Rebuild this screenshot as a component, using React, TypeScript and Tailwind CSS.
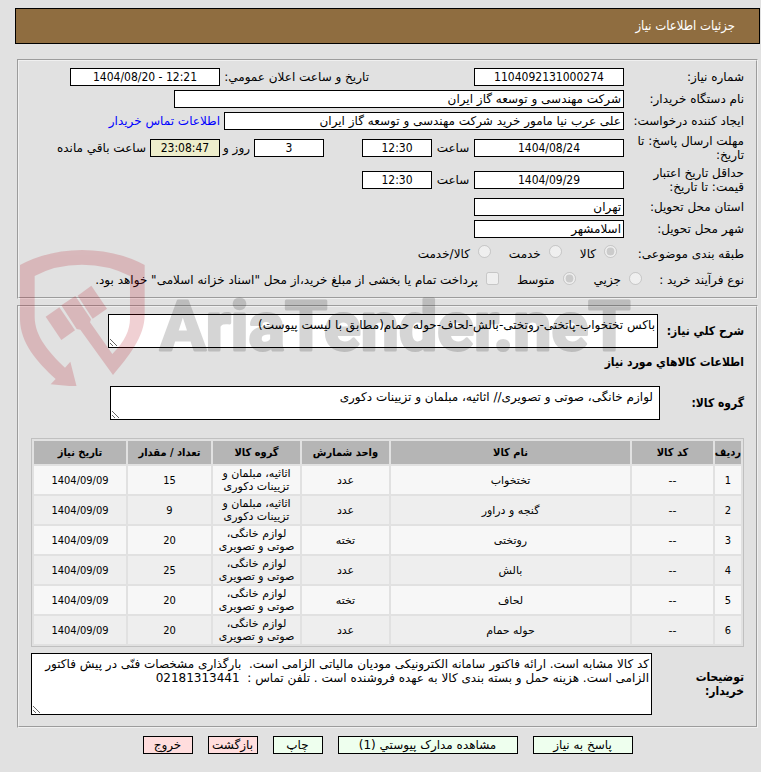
import { useState, type ReactNode } from "react";
import { clsx } from "clsx";

interface Item {
  name: string;
  unit: string;
  group: string;
  qty: number;
}

const DECOR = "اثاثیه، مبلمان و تزیینات دکوری";
const HOME = "لوازم خانگی، صوتی و تصویری";

const items: Item[] = [
  { name: "تختخواب", unit: "عدد", group: DECOR, qty: 15 },
  { name: "گنجه و دراور", unit: "عدد", group: DECOR, qty: 9 },
  { name: "روتختی", unit: "تخته", group: HOME, qty: 20 },
  { name: "بالش", unit: "عدد", group: HOME, qty: 25 },
  { name: "لحاف", unit: "تخته", group: HOME, qty: 20 },
  { name: "حوله حمام", unit: "عدد", group: HOME, qty: 20 },
];

const columns = [
  { title: "ردیف", width: "w-[26px]" },
  { title: "کد کالا", width: "w-[81px]" },
  { title: "نام کالا", width: "" },
  { title: "واحد شمارش", width: "w-[87px]" },
  { title: "گروه کالا", width: "w-[87px]" },
  { title: "تعداد / مقدار", width: "w-[83px]" },
  { title: "تاریخ نیاز", width: "w-[92px]" },
];

interface FieldProps {
  id: string;
  value: string;
  className: string;
  label?: string;
  numeric?: boolean;
}

function Field({ id, value, className, label, numeric }: FieldProps) {
  return (
    <input
      id={id}
      type="text"
      readOnly
      aria-label={label}
      defaultValue={value}
      className={clsx(
        "h-[18px] shrink-0 border border-black px-0.5 leading-[14px] outline-none",
        numeric && "text-center font-['DejaVu_Sans_Condensed',sans-serif] [direction:ltr]",
        className
      )}
    />
  );
}

interface RowProps {
  label: string;
  htmlFor?: string;
  tall?: boolean;
  children: ReactNode;
}

function Row({ label, htmlFor, tall, children }: RowProps) {
  return (
    <div className={clsx("flex items-center", tall ? "h-8" : "h-[22px]")}>
      <label htmlFor={htmlFor} className="w-[120px] shrink-0 pe-1">
        {label}
      </label>
      {children}
    </div>
  );
}

interface OptionProps {
  type: "radio" | "checkbox";
  name: string;
  label: string;
  checked?: boolean;
}

function Option({ type, name, label, checked }: OptionProps) {
  return (
    <label className="flex shrink-0 items-center gap-2 whitespace-nowrap">
      <input type={type} name={name} defaultChecked={checked} disabled className="mb-1 h-[13px] w-[13px]" />
      <span>{label}</span>
    </label>
  );
}

function Watermark() {
  return (
    <svg
      viewBox="20 249 640 137"
      className="pointer-events-none absolute top-[249px] left-5 h-[137px] w-[640px]"
      direction="ltr"
      aria-hidden="true"
    >
      <g transform="translate(0 190) scale(0.33333)" fill="#b00010" opacity="0.18">
        <path d="M60 225Q145 180 246 180Q350 180 434 225V375C434 440 385 500 339 555L241 419L230 417L184 346L226 318L273 388L270 397L337 492C375 455 390 420 390 385V258Q325 224 246 224Q165 224 104 258V380C104 440 150 490 195 533L211 515L230 590L152 583L167 567C110 515 62 460 60 390Z" />
        <path d="M137 380L178 352L225 421L184 450Z" />
        <path d="M233 317L274 287L321 356L278 386Z" />
      </g>
      <text
        x="160"
        y="350"
        fill="#000"
        stroke="#000"
        strokeWidth="3"
        strokeLinejoin="round"
        opacity="0.16"
        fontSize="68"
        className="font-['Roboto',sans-serif] font-bold"
      >
        AriaTender.neT
      </text>
    </svg>
  );
}

interface ActionProps {
  label: string;
  className: string;
}

function Action({ label, className }: ActionProps) {
  return (
    <button type="button" className={clsx("h-[18px] border border-black leading-4 whitespace-nowrap", className)}>
      {label}
    </button>
  );
}

export default function App() {
  const [notes, setNotes] = useState(
    "کد کالا مشابه است. ارائه فاکتور سامانه الکترونیکی مودیان مالیاتی الزامی است.  بارگذاری مشخصات فنّی در پیش فاکتور الزامی است. هزینه حمل و بسته بندی کالا به عهده فروشنده است . تلفن تماس :  02181313441"
  );

  return (
    <div
      dir="rtl"
      className="relative min-h-screen bg-[#e1e1e1] pt-2 pr-px pb-[18px] pl-[15px] font-['DejaVu_Sans',sans-serif] text-[12px] leading-[14px] text-black"
    >
      <header className="flex h-9 items-center border border-black bg-[#8f6d40] px-6">
        <h1 className="font-['DejaVu_Sans_Condensed',sans-serif] text-[13px] text-white">جزئیات اطلاعات نیاز</h1>
      </header>

      <main className="mx-0.5 mt-[15px]">
        <section className="border-2 border-[#f0f0f0] pt-[5px] pr-3 pb-1 pl-3 [border-style:groove]">
          <Row label="شماره نیاز:" htmlFor="number">
            <Field id="number" value="1104092131000274" numeric className="w-[150px] bg-white" />
            <label htmlFor="announced" className="ms-[105px] w-[149px] shrink-0 whitespace-nowrap">
              تاریخ و ساعت اعلان عمومي:
            </label>
            <Field id="announced" value="1404/08/20 - 12:21" numeric className="w-[150px] bg-white" />
          </Row>
          <Row label="نام دستگاه خریدار:" htmlFor="org">
            <Field id="org" value="شرکت مهندسی و توسعه گاز ایران" className="w-[450px] bg-white" />
          </Row>
          <Row label="ایجاد کننده درخواست:" htmlFor="creator">
            <Field id="creator" value="علی عرب نیا مامور خرید شرکت مهندسی و توسعه گاز ایران" className="w-[400px] bg-white" />
            <a href="#contact" className="ms-1 whitespace-nowrap text-[#0000ff]">
              اطلاعات تماس خریدار
            </a>
          </Row>
          <Row label="مهلت ارسال پاسخ: تا تاریخ:" htmlFor="deadline" tall>
            <Field id="deadline" value="1404/08/24" numeric className="w-[150px] bg-white" />
            <label htmlFor="deadline-time" className="w-[42px] shrink-0 text-center">ساعت</label>
            <Field id="deadline-time" value="12:30" numeric className="w-[70px] bg-white" />
            <Field id="days" value="3" numeric label="روز" className="mr-[38px] w-[70px] bg-white" />
            <label htmlFor="days" className="w-[34px] shrink-0 ps-1 whitespace-nowrap">روز و</label>
            <Field id="remaining" value="23:08:47" numeric className="w-[70px] bg-[#eeeecc]" />
            <label htmlFor="remaining" className="ms-1 whitespace-nowrap">ساعت باقي مانده</label>
          </Row>
          <Row label="حداقل تاریخ اعتبار قیمت: تا تاریخ:" htmlFor="validity" tall>
            <Field id="validity" value="1404/09/29" numeric className="w-[150px] bg-white" />
            <label htmlFor="validity-time" className="w-[42px] shrink-0 text-center">ساعت</label>
            <Field id="validity-time" value="12:30" numeric className="w-[70px] bg-white" />
          </Row>
          <Row label="استان محل تحویل:" htmlFor="province">
            <Field id="province" value="تهران" className="w-[150px] bg-white" />
          </Row>
          <Row label="شهر محل تحویل:" htmlFor="city">
            <Field id="city" value="اسلامشهر" className="w-[150px] bg-white" />
          </Row>
          <div className="flex h-[27px] items-center">
            <span className="w-[127px] shrink-0">طبقه بندی موضوعی:</span>
            <div className="flex gap-[18px]">
              <Option type="radio" name="kind" label="کالا" checked />
              <Option type="radio" name="kind" label="خدمت" />
              <Option type="radio" name="kind" label="کالا/خدمت" />
            </div>
          </div>
          <div className="flex h-[26px] items-center">
            <span className="w-[102px] shrink-0">نوع فرآیند خرید :</span>
            <div className="flex gap-[18px]">
              <Option type="radio" name="process" label="جزیي" />
              <Option type="radio" name="process" label="متوسط" checked />
              <Option type="checkbox" name="treasury" label='پرداخت تمام یا بخشی از مبلغ خرید،از محل "اسناد خزانه اسلامی" خواهد بود.' />
            </div>
          </div>
        </section>

        <section className="mt-1.5 border-2 border-[#f0f0f0] pt-[7px] pr-3 pb-[11px] pl-3 [border-style:groove]">
          <div className="flex items-center gap-1">
            <label htmlFor="summary" className="w-[82px] shrink-0 font-['DejaVu_Sans_Condensed',sans-serif] font-bold whitespace-nowrap">
              شرح كلي نیاز:
            </label>
            <textarea
              id="summary"
              readOnly
              defaultValue="باکس تختخواب-پاتختی-روتختی-بالش-لحاف-حوله حمام(مطابق با لیست پیوست)"
              className="h-[34px] w-[550px] border border-black bg-white px-0.5 py-[3px]"
            />
          </div>
          <h2 className="mt-[7px] font-['DejaVu_Sans_Condensed',sans-serif] font-bold">اطلاعات كالاهاي مورد نیاز</h2>
          <div className="mt-[17px] flex items-center gap-1">
            <label htmlFor="group" className="w-20 shrink-0 font-['DejaVu_Sans_Condensed',sans-serif] font-bold whitespace-nowrap">
              گروه کالا:
            </label>
            <textarea
              id="group"
              readOnly
              defaultValue="لوازم خانگی، صوتی و تصویری// اثاثیه، مبلمان و تزیینات دکوری"
              className="h-[34px] w-[550px] border border-black bg-white px-1.5 py-[3px]"
            />
          </div>

          <table className="mt-[18px] w-full table-fixed border-separate border-spacing-[2px] border border-[#c0c0c0] text-center text-[11px] leading-[13px]">
            <thead>
              <tr className="h-[23px] bg-[#b5b5b5]">
                {columns.map((col) => (
                  <th
                    key={col.title}
                    className={clsx("p-0 font-['DejaVu_Sans_Condensed',sans-serif] font-bold whitespace-nowrap", col.width)}
                  >
                    {col.title}
                  </th>
                ))}
              </tr>
            </thead>
            <tbody>
              {items.map((item, i) => (
                <tr key={item.name} className="h-7 odd:bg-[#f7f7f7] even:bg-[#eeeeee]">
                  <td className="p-0 font-['DejaVu_Sans_Condensed',sans-serif]">{i + 1}</td>
                  <td className="p-0">--</td>
                  <td className="p-0">{item.name}</td>
                  <td className="p-0">{item.unit}</td>
                  <td className="p-0 px-1">{item.group}</td>
                  <td className="p-0 font-['DejaVu_Sans_Condensed',sans-serif]">{item.qty}</td>
                  <td className="p-0 font-['DejaVu_Sans_Condensed',sans-serif]">1404/09/09</td>
                </tr>
              ))}
            </tbody>
          </table>

          <div className="mt-1.5 flex items-center">
            <label htmlFor="notes" className="w-[92px] shrink-0 pe-8 font-['DejaVu_Sans_Condensed',sans-serif] font-bold">
              توضیحات خریدار:
            </label>
            <textarea
              id="notes"
              value={notes}
              onChange={(e) => setNotes(e.target.value)}
              className="h-[62px] min-w-0 flex-1 border border-black bg-white px-0.5 py-[3px]"
            />
          </div>
        </section>
      </main>

      <footer className="mt-2 flex justify-center gap-[15px]">
        <Action label="پاسخ به نیاز" className="w-[100px] bg-[#eeffee]" />
        <Action label="مشاهده مدارک پیوستي (1)" className="w-[180px] bg-[#eeffee]" />
        <Action label="چاپ" className="w-[50px] bg-[#eeffee]" />
        <Action label="بازگشت" className="w-[50px] bg-[#ffdddd]" />
        <Action label="خروج" className="w-[50px] bg-[#ffdddd]" />
      </footer>

      <Watermark />
    </div>
  );
}
